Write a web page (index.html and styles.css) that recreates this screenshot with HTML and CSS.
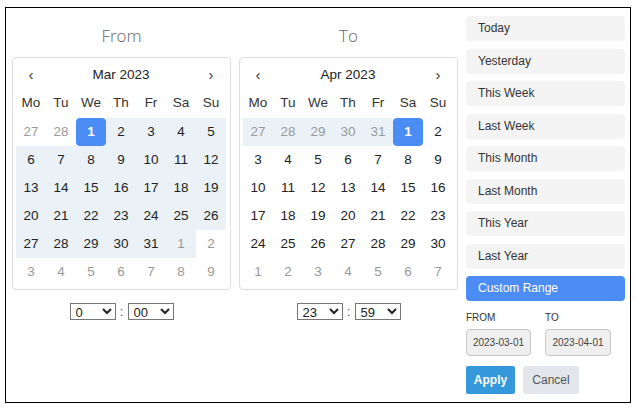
FILE: index.html
```html
<!DOCTYPE html>
<html>
<head>
<meta charset="utf-8">
<link rel="stylesheet" href="styles.css">
</head>
<body>
<div class="picker">
  <div class="cal-col">
    <div class="title">From</div>
    <div class="cal">
      <span class="nav">‹</span><span class="month">Mar 2023</span><span class="nav">›</span>
      <span class="wd">Mo</span><span class="wd">Tu</span><span class="wd">We</span><span class="wd">Th</span><span class="wd">Fr</span><span class="wd">Sa</span><span class="wd">Su</span>
      <span class="d off">27</span><span class="d off">28</span><span class="d sel">1</span><span class="d rng">2</span><span class="d rng">3</span><span class="d rng">4</span><span class="d rng">5</span>
      <span class="d rng">6</span><span class="d rng">7</span><span class="d rng">8</span><span class="d rng">9</span><span class="d rng">10</span><span class="d rng">11</span><span class="d rng">12</span>
      <span class="d rng">13</span><span class="d rng">14</span><span class="d rng">15</span><span class="d rng">16</span><span class="d rng">17</span><span class="d rng">18</span><span class="d rng">19</span>
      <span class="d rng">20</span><span class="d rng">21</span><span class="d rng">22</span><span class="d rng">23</span><span class="d rng">24</span><span class="d rng">25</span><span class="d rng">26</span>
      <span class="d rng">27</span><span class="d rng">28</span><span class="d rng">29</span><span class="d rng">30</span><span class="d rng">31</span><span class="d off rng">1</span><span class="d off">2</span>
      <span class="d off">3</span><span class="d off">4</span><span class="d off">5</span><span class="d off">6</span><span class="d off">7</span><span class="d off">8</span><span class="d off">9</span>
    </div>
    <div class="time">
      <select><option>0</option></select><span class="colon">:</span><select><option>00</option></select>
    </div>
  </div>
  <div class="cal-col">
    <div class="title">To</div>
    <div class="cal">
      <span class="nav">‹</span><span class="month">Apr 2023</span><span class="nav">›</span>
      <span class="wd">Mo</span><span class="wd">Tu</span><span class="wd">We</span><span class="wd">Th</span><span class="wd">Fr</span><span class="wd">Sa</span><span class="wd">Su</span>
      <span class="d off rng">27</span><span class="d off rng">28</span><span class="d off rng">29</span><span class="d off rng">30</span><span class="d off rng">31</span><span class="d sel">1</span><span class="d">2</span>
      <span class="d">3</span><span class="d">4</span><span class="d">5</span><span class="d">6</span><span class="d">7</span><span class="d">8</span><span class="d">9</span>
      <span class="d">10</span><span class="d">11</span><span class="d">12</span><span class="d">13</span><span class="d">14</span><span class="d">15</span><span class="d">16</span>
      <span class="d">17</span><span class="d">18</span><span class="d">19</span><span class="d">20</span><span class="d">21</span><span class="d">22</span><span class="d">23</span>
      <span class="d">24</span><span class="d">25</span><span class="d">26</span><span class="d">27</span><span class="d">28</span><span class="d">29</span><span class="d">30</span>
      <span class="d off">1</span><span class="d off">2</span><span class="d off">3</span><span class="d off">4</span><span class="d off">5</span><span class="d off">6</span><span class="d off">7</span>
    </div>
    <div class="time">
      <select><option>23</option></select><span class="colon">:</span><select><option>59</option></select>
    </div>
  </div>
  <div class="ranges">
    <div class="range">Today</div>
    <div class="range">Yesterday</div>
    <div class="range">This Week</div>
    <div class="range">Last Week</div>
    <div class="range">This Month</div>
    <div class="range">Last Month</div>
    <div class="range">This Year</div>
    <div class="range">Last Year</div>
    <div class="range active">Custom Range</div>
    <div class="inputs">
      <label class="lbl">FROM</label>
      <label class="lbl">TO</label>
      <div class="field">2023-03-01</div>
      <div class="field">2023-04-01</div>
    </div>
    <div class="actions">
      <button class="btn apply">Apply</button>
      <button class="btn cancel">Cancel</button>
    </div>
  </div>
</div>
</body>
</html>
```

FILE: styles.css
```css
html, body {
  margin: 0;
  padding: 0;
  background: #fff;
}
body {
  font-family: "Liberation Sans", Arial, sans-serif;
  color: #333;
}
.picker {
  margin: 7px 0 0 5px;
  width: 626px;
  height: 396px;
  box-sizing: border-box;
  border: 1px solid #000;
  padding: 8px 5px 0 6px;
  display: flex;
  gap: 8px;
}
.cal-col {
  width: 219px;
  display: flex;
  flex-direction: column;
}
.title {
  height: 41px;
  line-height: 40px;
  text-align: center;
  font-family: "Open Sans", sans-serif;
  font-weight: 300;
  font-size: 17px;
  color: #666;
}
.cal {
  box-sizing: border-box;
  height: 232.5px;
  border: 1px solid #dedede;
  border-radius: 4px;
  padding: 2px 3px 3px;
  display: grid;
  grid-template-columns: repeat(7, 30px);
  grid-template-rows: 28px 29.5px repeat(6, 28px);
}
.cal span {
  display: flex;
  align-items: center;
  justify-content: center;
}
.nav {
  font-size: 15px;
  color: #333;
}
.month {
  grid-column: span 5;
  font-size: 13.5px;
  color: #222;
}
.wd {
  font-size: 13.5px;
  color: #333;
}
.d {
  font-size: 13.5px;
  color: #222;
}
.d.off {
  color: #999;
}
.d.rng {
  background: #eaf2f8;
}
.d.sel {
  background: #4b8cf5;
  color: #fff;
  font-weight: bold;
  border-radius: 4px;
}
.time {
  margin-top: 13px;
  display: flex;
  justify-content: center;
  align-items: center;
}
.time select {
  width: 46px;
  height: 17px;
  font-family: "Liberation Sans", Arial, sans-serif;
  font-size: 13px;
  border: 1px solid #767676;
  border-radius: 0;
  padding: 0 0 0 1px;
  background: #fff;
  color: #222;
}
.colon {
  width: 12px;
  text-align: center;
  font-size: 13px;
  color: #555;
}
.ranges {
  width: 159px;
  display: flex;
  flex-direction: column;
  gap: 7.5px;
}
.range {
  height: 25px;
  line-height: 24px;
  padding-left: 12px;
  border-radius: 4px;
  background: #f4f4f4;
  font-size: 12px;
  color: #333;
}
.range.active {
  background: #4b8cf5;
  color: #fff;
}
.inputs {
  margin-top: 3.5px;
  display: grid;
  grid-template-columns: 65px 66px;
  column-gap: 14px;
  row-gap: 5px;
}
.lbl {
  font-size: 10px;
  line-height: 12px;
  color: #333;
}
.field {
  box-sizing: border-box;
  height: 27px;
  line-height: 25px;
  border: 1px solid #c8c8c8;
  border-radius: 4px;
  background: #efefef;
  font-size: 10px;
  color: #444;
  text-align: center;
}
.actions {
  margin-top: 2.5px;
  display: flex;
  gap: 8px;
}
.btn {
  height: 28px;
  border: none;
  border-radius: 2px;
  font-family: "Liberation Sans", Arial, sans-serif;
  font-size: 12px;
  padding: 0;
}
.apply {
  width: 49px;
  background: #3498db;
  color: #fff;
  font-weight: bold;
}
.cancel {
  width: 56px;
  background: #e3e7eb;
  color: #555;
}
```
